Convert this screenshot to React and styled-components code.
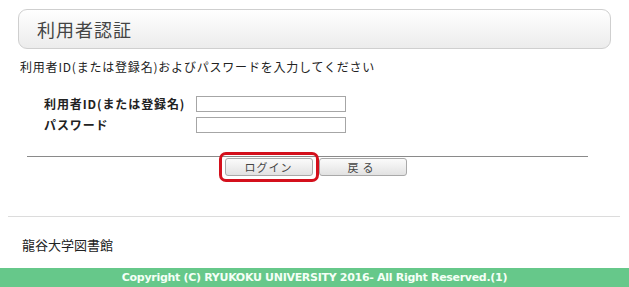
import React from "react";
import styled, { createGlobalStyle } from "styled-components";

const GlobalStyle = createGlobalStyle`
  html, body {
    margin: 0;
    padding: 0;
    background: #fff;
  }
  body {
    font-family: "Noto Sans CJK JP", "Liberation Sans", sans-serif;
    color: #333;
  }
`;

const Page = styled.div`
  width: 629px;
  height: 287px;
  overflow: hidden;
  display: flex;
  flex-direction: column;
`;

const Main = styled.div`
  padding: 9px 18px 0 18px;
`;

const TitleBox = styled.div`
  height: 38px;
  border: 1px solid #cfcfcf;
  border-radius: 9px;
  background: linear-gradient(#ffffff, #ececec);
  display: flex;
  align-items: center;
  padding-left: 18px;
  box-sizing: content-box;
`;

const Title = styled.h1`
  margin: 0;
  font-size: 18px;
  font-weight: normal;
  color: #444;
  letter-spacing: 1px;
`;

const Lead = styled.p`
  margin: 10px 0 0 2px;
  font-size: 12px;
  line-height: 16px;
  color: #222;
  letter-spacing: 0.8px;
`;

const FormGrid = styled.div`
  display: grid;
  grid-template-columns: 152px 150px;
  row-gap: 5px;
  margin: 21px 0 0 26px;
  align-items: center;
`;

const Label = styled.label`
  font-size: 12px;
  font-weight: bold;
  color: #222;
  line-height: 16px;
  letter-spacing: 0.9px;
`;

const Field = styled.input`
  width: 150px;
  height: 16px;
  box-sizing: border-box;
  border: 1px solid #a6a6a6;
  padding: 0 2px;
  margin: 0;
  font-size: 12px;
`;

const Rule = styled.hr`
  margin: 23px 41px 0 27px;
  border: 0;
  border-top: 1px solid #8a8a8a;
  height: 0;
`;

const ButtonRow = styled.div`
  display: flex;
  justify-content: center;
  align-items: center;
  margin-top: -5px;
  margin-left: -4px;
`;

const Highlight = styled.div`
  border: 3px solid #d4101c;
  border-radius: 7px;
  padding: 3px 3px;
  display: flex;
`;

const Button = styled.button`
  width: ${(p) => p.$w}px;
  height: 18px;
  border: 1px solid #a9a9a9;
  border-radius: 3px;
  background: linear-gradient(#fbfbfb, #e2e2e2);
  font-family: "Noto Sans CJK JP", sans-serif;
  font-size: 11px;
  color: #444;
  padding: 0;
  line-height: 16px;
  letter-spacing: ${(p) => p.$ls || 0}px;
  cursor: pointer;
`;

const FooterRule = styled.div`
  margin: 34px 9px 0 8px;
  border-top: 1px solid #dcdcdc;
`;

const LibName = styled.div`
  margin: 19px 0 0 22px;
  font-size: 13px;
  line-height: 18px;
  color: #222;
`;

const Copyright = styled.div`
  margin-top: auto;
  height: 19px;
  background: #66c88a;
  color: #f4fff6;
  font-family: "DejaVu Sans", sans-serif;
  font-size: 11px;
  font-weight: bold;
  line-height: 19px;
  text-align: center;
  letter-spacing: -0.3px;
`;

export default function App() {
  return (
    <Page>
      <GlobalStyle />
      <Main>
        <TitleBox>
          <Title>利用者認証</Title>
        </TitleBox>
        <Lead>利用者ID(または登録名)およびパスワードを入力してください</Lead>
        <FormGrid>
          <Label>利用者ID(または登録名)</Label>
          <Field type="text" />
          <Label>パスワード</Label>
          <Field type="password" />
        </FormGrid>
      </Main>
      <Rule />
      <ButtonRow>
        <Highlight>
          <Button $w={88} $ls={1}>ログイン</Button>
        </Highlight>
        <Button $w={88} $ls={4}>戻る</Button>
      </ButtonRow>
      <FooterRule />
      <LibName>龍谷大学図書館</LibName>
      <Copyright>Copyright (C) RYUKOKU UNIVERSITY 2016- All Right Reserved.(1)</Copyright>
    </Page>
  );
}
